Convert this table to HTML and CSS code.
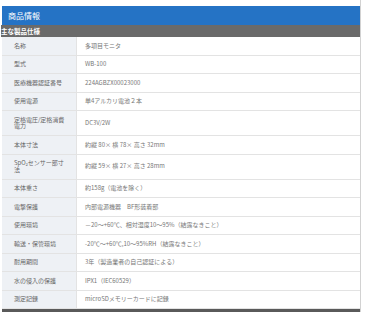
FILE: index.html
```html
<!DOCTYPE html>
<html lang="ja">
<head>
<meta charset="utf-8">
<link rel="stylesheet" href="styles.css">
</head>
<body>
<div class="page">
  <div class="title">商品情報</div>
  <div class="subtitle">主な製品仕様</div>
  <table class="spec">
    <tr><th>名称</th><td>多項目モニタ</td></tr>
    <tr><th>型式</th><td>WB-100</td></tr>
    <tr><th>医療機器認証番号</th><td>224AGBZX00023000</td></tr>
    <tr><th>使用電源</th><td>単4アルカリ電池２本</td></tr>
    <tr><th>定格電圧/定格消費電力</th><td>DC3V/2W</td></tr>
    <tr><th>本体寸法</th><td>約縦 80× 横 78× 高さ 32mm</td></tr>
    <tr><th>SpO₂センサー部寸法</th><td>約縦 59× 横 27× 高さ 28mm</td></tr>
    <tr><th>本体重さ</th><td>約158g（電池を除く）</td></tr>
    <tr><th>電撃保護</th><td>内部電源機器　BF形装着部</td></tr>
    <tr><th>使用環境</th><td>－20～+60℃、相対湿度10～95%（結露なきこと）</td></tr>
    <tr><th>輸送・保管環境</th><td>-20℃～+60℃,10～95%RH（結露なきこと）</td></tr>
    <tr><th>耐用期間</th><td>3年（製造業者の自己認証による）</td></tr>
    <tr><th>水の侵入の保護</th><td>IPX1（IEC60529）</td></tr>
    <tr><th>測定記録</th><td>microSDメモリーカードに記録</td></tr>
  </table>
  <div class="endbar"></div>
</div>
</body>
</html>
```

FILE: styles.css
```css
html, body {
  margin: 0;
  padding: 0;
  background: #ffffff;
}
body {
  font-family: "Noto Sans CJK JP", "Noto Sans", sans-serif;
}
.page {
  margin-left: 2px;
  width: 358px;
  padding-top: 6px;
  border-right: 1px solid #d2d2d2;
}
.title {
  height: 19px;
  background: #2573c5;
  color: #ffffff;
  font-size: 8px;
  line-height: 19px;
  padding-left: 6px;
}
.subtitle {
  height: 12px;
  background: #6a6a6a;
  color: #ffffff;
  font-size: 6.5px;
  font-weight: bold;
  line-height: 12px;
  margin-left: -1px;
  padding-left: 0;
}
.spec {
  width: 100%;
  border-collapse: collapse;
  font-size: 6px;
  line-height: 6.5px;
}
.spec th, .spec td {
  border-bottom: 1px solid #e3e3e3;
  padding-top: 5.5px;
  padding-bottom: 5.5px;
  text-align: left;
  vertical-align: middle;
}
.spec th {
  width: 51px;
  background: #eef1f5;
  color: #666666;
  font-weight: normal;
  padding-left: 12px;
  padding-right: 11px;
  border-right: 1px solid #e3e3e3;
}
.spec td {
  color: #777777;
  padding-left: 8px;
}
.endbar {
  height: 3px;
  background: #5a5a5a;
}
```
